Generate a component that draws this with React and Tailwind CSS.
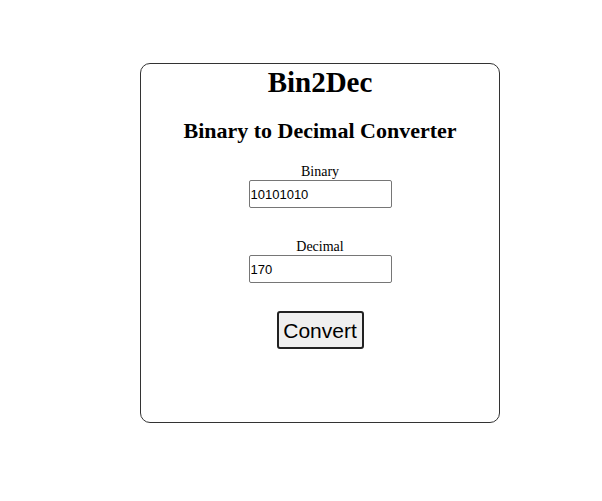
import React, { useState } from 'react';

function App() {
  const [binary, setBinary] = useState('10101010');
  const [decimal, setDecimal] = useState('170');

  const convert = () => {
    if (/^[01]+$/.test(binary)) setDecimal(String(parseInt(binary, 2)));
  };

  return (
    <div className="w-[602px] h-[501px] bg-white pt-[63px] pl-[140px]" style={{ fontFamily: '"Liberation Serif", serif' }}>
      <div className="w-[360px] h-[360px] border border-[#333] rounded-[10px] flex flex-col items-center text-black">
        <h1 className="text-[29px] font-bold leading-none mt-[4px]">Bin2Dec</h1>
        <h2 className="text-[22px] font-bold leading-none mt-[23px]">Binary to Decimal Converter</h2>

        <label className="text-[14px] leading-none mt-[23px]">Binary</label>
        <input
          value={binary}
          onChange={(e) => setBinary(e.target.value)}
          className="w-[143px] h-[28px] mt-[1px] px-[1px] border border-[#767676] rounded-[2px] text-[13px] text-black outline-none"
          style={{ fontFamily: '"Liberation Sans", sans-serif' }}
        />

        <label className="text-[14px] leading-none mt-[32px]">Decimal</label>
        <input
          value={decimal}
          readOnly
          className="w-[143px] h-[28px] mt-[1px] px-[1px] border border-[#767676] rounded-[2px] text-[13px] text-black outline-none"
          style={{ fontFamily: '"Liberation Sans", sans-serif' }}
        />

        <button
          onClick={convert}
          className="mt-[28px] w-[87px] h-[38px] bg-[#efefef] border-2 border-[#222] rounded-[3px] text-[21px] leading-none"
          style={{ fontFamily: '"Liberation Sans", sans-serif' }}
        >
          Convert
        </button>
      </div>
    </div>
  );
}

export default App;
